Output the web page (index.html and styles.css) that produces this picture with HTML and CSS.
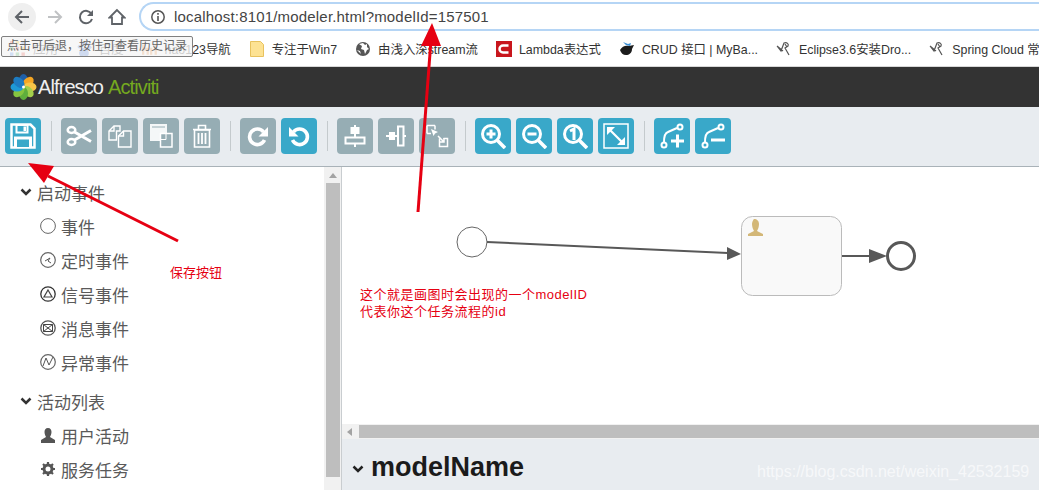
FILE: index.html
```html
<html>
<head>
<meta charset="utf-8">
<link rel="stylesheet" href="styles.css">
</head>
<body>
<div class="chrome">
	<div class="navbar">
		<span class="navBack"><svg width="18" height="18" viewBox="0 0 18 18"><path d="M16 9H3M9 3 3 9l6 6" fill="none" stroke="#5f6368" stroke-width="2"/></svg></span>
		<svg class="navIcon navForward" width="18" height="18" viewBox="0 0 18 18"><path d="M2 9h13M9 3l6 6-6 6" fill="none" stroke="#c0c2c4" stroke-width="2"/></svg>
		<svg class="navIcon" width="18" height="18" viewBox="0 0 18 18"><path d="M14.500 6A6.200 6.200 0 1 0 15 11" fill="none" stroke="#5f6368" stroke-width="2"/><path d="M16 2v6h-6z" fill="#5f6368"/></svg>
		<svg class="navIcon" width="18" height="18" viewBox="0 0 18 18"><path d="M9 2 1.500 9.500H4V16h10V9.500h2.500z" fill="none" stroke="#5f6368" stroke-width="1.800"/></svg>
		<div class="omnibox">
			<svg width="16" height="16" viewBox="0 0 16 16"><circle cx="8" cy="8" r="6.200" fill="none" stroke="#555" stroke-width="1.500"/><path d="M8 7v5M8 4v1.800" stroke="#555" stroke-width="1.600"/></svg>
			<span class="url">localhost:8101/modeler.html?modelId=157501</span>
		</div>
	</div>
	<div class="bookmarks">
		<span class="mark"><svg viewBox="0 0 14 14"><path d="M0 0h3v3H0z" fill="#ea4335"/><path d="M5 0h3v3H5z" fill="#fbbc05"/><path d="M10 0h3v3h-3z" fill="#4285f4"/><path d="M0 5h3v3H0z" fill="#34a853"/><path d="M5 5h3v3H5z" fill="#ea4335"/><path d="M10 5h3v3h-3z" fill="#fbbc05"/><path d="M0 10h3v3H0z" fill="#4285f4"/><path d="M5 10h3v3H5z" fill="#34a853"/><path d="M10 10h3v3h-3z" fill="#ea4335"/></svg>应用</span>
		<span class="mark"><svg viewBox="0 0 14 14"><path d="M7 6c3 0 5 4 4 6s-3 1-4 1-3 1-4-1 1-6 4-6z" fill="#3b6fd8"/><circle cx="3" cy="5" r="1.600" fill="#3b6fd8"/><circle cx="6" cy="2.500" r="1.600" fill="#3b6fd8"/><circle cx="9.500" cy="2.500" r="1.600" fill="#3b6fd8"/><circle cx="12" cy="5.500" r="1.600" fill="#3b6fd8"/></svg>百度</span>
		<span class="mark"><svg viewBox="0 0 14 14"><path d="M1 12V3M1 7h4v5M8 12V6M12 12V3" fill="none" stroke="#ef8b3a" stroke-width="2"/></svg>hao123导航</span>
		<span class="mark"><svg viewBox="0 0 14 16"><path d="M.5.500h10l3 3v12H.5z" fill="#fde293" stroke="#e8c25e"/></svg>专注于Win7</span>
		<span class="mark"><svg viewBox="0 0 16 16"><circle cx="8" cy="8" r="7" fill="#555"/><path d="M4 3l3 2-1 3 3 1 1 4 2-4 2-1-2-2 0-3-2 1-2-2zM2 9l3 1 1 3z" fill="#fff"/></svg>由浅入深stream流</span>
		<span class="mark"><svg viewBox="0 0 16 16"><rect width="16" height="16" fill="#c8161d"/><path d="M12.500 4.500H7a3.500 3.500 0 0 0 0 7h5.500" fill="none" stroke="#fff" stroke-width="2.500"/></svg>Lambda表达式</span>
		<span class="mark"><svg viewBox="0 0 16 16"><path d="M1 9c2-4 6-5 9-4l5-1-2 4c0 4-3 6-6 6S2 12 1 9z" fill="#1c1c1c"/><path d="M4 1l5 2 3-1-1 3-4-1z" fill="#3a8fd6"/></svg>CRUD 接口 | MyBa...</span>
		<span class="mark"><svg viewBox="0 0 16 16"><path d="M1 5l4 5 3-8c3-1 5 1 4 3l-3 2 4 7M9 3l2 3M1 5l6 5" fill="none" stroke="#555" stroke-width="1.200"/></svg>Eclipse3.6安装Dro...</span>
		<span class="mark"><svg viewBox="0 0 16 16"><path d="M1 5l4 5 3-8c3-1 5 1 4 3l-3 2 4 7M9 3l2 3M1 5l6 5" fill="none" stroke="#555" stroke-width="1.200"/></svg>Spring Cloud 常</span>
	</div>
</div>

<div class="header">
	<svg width="27" height="26" viewBox="0 0 26 26">
		<ellipse cx="13" cy="6.500" rx="4.500" ry="6.500" fill="#1f5fa8"/>
		<ellipse cx="13" cy="6.500" rx="4.500" ry="6.500" fill="#f5a623" transform="rotate(45 13 13)"/>
		<ellipse cx="13" cy="6.500" rx="4.500" ry="6.500" fill="#f7c548" transform="rotate(90 13 13)"/>
		<ellipse cx="13" cy="6.500" rx="4.500" ry="6.500" fill="#a3cf4c" transform="rotate(135 13 13)"/>
		<ellipse cx="13" cy="6.500" rx="4.500" ry="6.500" fill="#5fae3c" transform="rotate(180 13 13)"/>
		<ellipse cx="13" cy="6.500" rx="4.500" ry="6.500" fill="#86c440" transform="rotate(225 13 13)"/>
		<ellipse cx="13" cy="6.500" rx="4.500" ry="6.500" fill="#1e9ad6" transform="rotate(270 13 13)"/>
		<ellipse cx="13" cy="6.500" rx="4.500" ry="6.500" fill="#1d7cc2" transform="rotate(315 13 13)"/>
		<circle cx="13" cy="13" r="1.500" fill="#fff"/>
	</svg>
	<span class="brand">Alfresco</span><span class="product">Activiti</span>
</div>

<div class="toolbar">
	<button class="tool live"><svg viewBox="0 0 26 26"><path d="M1.500 1.500h19l4 4v19h-23z" fill="none" stroke="#fff" stroke-width="2.500"/><path d="M6.500 2h11v7.500h-11z" fill="none" stroke="#fff" stroke-width="2"/><path d="M13.500 3.500h2.500v4.500h-2.500z" fill="#fff"/><path d="M4 13.500h18V24H4z" fill="#fff"/><path d="M7 16.500h12V24H7z" fill="#39a8c9"/></svg></button>
	<span class="sep"></span>
	<button class="tool"><svg viewBox="0 0 26 26"><g fill="none" stroke="#fff" stroke-width="2.500"><ellipse cx="5.500" cy="7" rx="3.800" ry="3"/><ellipse cx="5.500" cy="19" rx="3.800" ry="3"/><path d="M8.500 9 25 18.500M8.500 17 25 7.500" stroke-width="3"/></g></svg></button>
	<button class="tool"><svg viewBox="0 0 26 26"><g fill="none" stroke="#fff" stroke-width="1.400"><path d="M7 3h6v5H9.500v9H2V8z"/><path d="M7 3v5H2"/><path d="M16.500 8H24v16H11.500V13z" fill="#96adb4"/><path d="M16.500 8v5h-5"/></g></svg></button>
	<button class="tool"><svg viewBox="0 0 26 26"><path d="M2 1h17v9h-7v8H2z" fill="#f4f7f8"/><path d="M4 4h13" stroke="#96adb4"/><path d="M12.500 10.500H24V24H12.500z" fill="#96adb4" stroke="#fff" stroke-width="1.500"/><path d="M12.500 16.500h5.500v-6" fill="none" stroke="#fff"/></svg></button>
	<button class="tool"><svg viewBox="0 0 26 26"><g fill="none" stroke="#fff"><path d="M4 6.500h18M9.500 6V2.500h7V6" stroke-width="1.600"/><path d="M5.500 7h15v17h-15z" stroke-width="1.600"/><path d="M9.500 10v11M13 10v11M16.500 10v11" stroke-width="1.800"/></g></svg></button>
	<span class="sep"></span>
	<button class="tool"><svg viewBox="0 0 26 26"><path d="M18.500 9a7.800 7.800 0 1 0 1 8" fill="none" stroke="#fff" stroke-width="3.600"/><path d="M23 4v9.500h-9.500z" fill="#fff"/></svg></button>
	<button class="tool live"><svg viewBox="0 0 26 26"><path d="M7.500 9a7.800 7.800 0 1 1-1 8" fill="none" stroke="#fff" stroke-width="3.600"/><path d="M3 4v9.500h9.500z" fill="#fff"/></svg></button>
	<span class="sep"></span>
	<button class="tool"><svg viewBox="0 0 26 26"><path d="M13 2v22" stroke="#fff" stroke-width="2"/><path d="M8.500 4h9v7h-9z" fill="#fff"/><path d="M3.500 14.500h19v6h-19z" fill="#96adb4" stroke="#fff" stroke-width="2"/></svg></button>
	<button class="tool"><svg viewBox="0 0 26 26"><path d="M3 13h20" stroke="#fff" stroke-width="2"/><path d="M6 9h6v8H6z" fill="#fff"/><path d="M15 3.500h5.500v19H15z" fill="#96adb4" stroke="#fff" stroke-width="2"/></svg></button>
	<button class="tool"><svg viewBox="0 0 26 26"><g fill="none" stroke="#fff" stroke-width="1.500"><path d="M3 2.500h8M3 2.500v8M3 10.500h4M11 2.500v4" /><path d="M15.500 15.500v8h8v-8h-4M15.500 15.500h1"/></g><path d="M7 6l7 3-3 1.500L9.500 13z" fill="#fff"/><path d="M14 13l6 6M20 15v4h-4" fill="none" stroke="#fff" stroke-width="1.500"/></svg></button>
	<span class="sep"></span>
	<button class="tool live"><svg viewBox="0 0 26 26"><circle cx="11" cy="11" r="8.500" fill="none" stroke="#fff" stroke-width="3"/><path d="M17.500 17.500 25 25" stroke="#fff" stroke-width="3.600"/><path d="M6.500 11h9M11 6.500v9" stroke="#fff" stroke-width="3"/></svg></button>
	<button class="tool live"><svg viewBox="0 0 26 26"><circle cx="11" cy="11" r="8.500" fill="none" stroke="#fff" stroke-width="3"/><path d="M17.500 17.500 25 25" stroke="#fff" stroke-width="3.600"/><path d="M6.500 11h9" stroke="#fff" stroke-width="3"/></svg></button>
	<button class="tool live"><svg viewBox="0 0 26 26"><circle cx="11" cy="11" r="8.500" fill="none" stroke="#fff" stroke-width="3"/><path d="M17.500 17.500 25 25" stroke="#fff" stroke-width="3.600"/><path d="M8 8l4-2v11" fill="none" stroke="#fff" stroke-width="3"/></svg></button>
	<button class="tool live"><svg viewBox="0 0 26 26"><path d="M1 1h24v24H1z" fill="none" stroke="#fff" stroke-width="1.500"/><path d="M6 6l14 14" stroke="#fff" stroke-width="2.200"/><path d="M4 4h8l-8 8zM22 22h-8l8-8z" fill="#fff"/></svg></button>
	<span class="sep"></span>
	<button class="tool live"><svg viewBox="0 0 26 26"><g fill="none" stroke="#fff" stroke-width="2"><circle cx="5" cy="22" r="2.500"/><circle cx="21" cy="4" r="2.500"/><path d="M5 19c0-5 1-9 4-10l9-4"/></g><path d="M12 18h13M18.500 11.500v13" stroke="#fff" stroke-width="3"/></svg></button>
	<button class="tool live"><svg viewBox="0 0 26 26"><g fill="none" stroke="#fff" stroke-width="2"><circle cx="5" cy="22" r="2.500"/><circle cx="21" cy="4" r="2.500"/><path d="M5 19c0-5 1-9 4-10l9-4"/></g><path d="M11 17h14" stroke="#fff" stroke-width="3"/></svg></button>
</div>

<div class="workspace">
	<div class="palette">
		<div class="paletteList">
			<div class="group"><svg width="12" height="9" viewBox="0 0 12 9"><path d="M1.500 1.500 6 6l4.500-4.500" fill="none" stroke="#333" stroke-width="2.500"/></svg>启动事件</div>
			<div class="item"><svg viewBox="0 0 16 16"><circle cx="8" cy="8" r="7.400" fill="#fff" stroke="#666"/></svg>事件</div>
			<div class="item"><svg viewBox="0 0 16 16"><circle cx="8" cy="8" r="7.300" fill="#fff" stroke="#666" stroke-width="1.200"/><path d="M5 9l5-3-2 3 3 2" fill="none" stroke="#555"/></svg>定时事件</div>
			<div class="item"><svg viewBox="0 0 16 16"><circle cx="8" cy="8" r="7.200" fill="#fff" stroke="#333" stroke-width="1.300"/><path d="M8 4l4 7H4z" fill="none" stroke="#444" stroke-width="1.200"/></svg>信号事件</div>
			<div class="item"><svg viewBox="0 0 16 16"><circle cx="8" cy="8" r="7.200" fill="#fff" stroke="#555" stroke-width="1.300"/><path d="M3.500 4.500h9v7h-9zM3.500 4.500 8 8l4.500-3.500M3.500 11.500 8 8l4.500 3.500" fill="none" stroke="#444"/></svg>消息事件</div>
			<div class="item"><svg viewBox="0 0 16 16"><circle cx="8" cy="8" r="7.300" fill="#fff" stroke="#666" stroke-width="1.200"/><path d="M3 12 6 4l3 7 4-8" fill="none" stroke="#555"/></svg>异常事件</div>
			<div class="group groupNext"><svg width="12" height="9" viewBox="0 0 12 9"><path d="M1.500 1.500 6 6l4.500-4.500" fill="none" stroke="#333" stroke-width="2.500"/></svg>活动列表</div>
			<div class="item"><svg viewBox="0 0 16 16"><path d="M8 1c2.500 0 3.500 2 3.500 4S10.500 9 10 10l5 3v3H1v-3l5-3c-.5-1-1.500-3-1.500-5S5.500 1 8 1z" fill="#555"/></svg>用户活动</div>
			<div class="item"><svg viewBox="0 0 16 16"><circle cx="8" cy="8" r="4" fill="none" stroke="#555" stroke-width="3"/><path d="M8 1v3M8 12v3M1 8h3M12 8h3M3 3l2 2M11 11l2 2M13 3l-2 2M5 11l-2 2" stroke="#555" stroke-width="2.200"/></svg>服务任务</div>
		</div>
		<div class="vscroll"><span class="scrollUp"></span><span class="vthumb"></span></div>
	</div>
	<div class="main">
		<div class="canvas">
			<svg width="697" height="257" viewBox="0 0 697 257">
				<circle cx="130" cy="75" r="15" fill="#fff" stroke="#666"/>
				<path d="M145 75 386 86" stroke="#585858" stroke-width="2"/>
				<path d="M399 87 385 80v13z" fill="#585858"/>
				<rect x="399.500" y="49.500" width="100" height="79" rx="11" fill="#f9f9f9" stroke="#bbb"/>
				<path d="M412 52c3 0 5 2 5 5s-1 5-2 7l6 3v2h-15v-2l6-3c-1-2-2-4-2-7s2-5 2-5z" fill="#d3b777"/>
				<path d="M500 89h30" stroke="#585858" stroke-width="2"/>
				<path d="M545 89 527 82v14z" fill="#585858"/>
				<circle cx="559" cy="89" r="13.500" fill="#fff" stroke="#585858" stroke-width="3"/>
			</svg>
		</div>
		<div class="hscroll"><span class="scrollLeft"></span><span class="hthumb"></span></div>
		<div class="props">
			<svg width="12" height="9" viewBox="0 0 12 9"><path d="M1.500 1.500 6 6l4.500-4.500" fill="none" stroke="#222" stroke-width="2.500"/></svg>
			<span class="modelName">modelName</span>
		</div>
	</div>
</div>

<!-- annotations drawn on top of the screenshot -->
<div class="tooltip">点击可后退，按住可查看历史记录</div>
<svg class="arrows" width="1039" height="490" viewBox="0 0 1039 490">
	<path d="M418 212 431 40" stroke="#e60012" stroke-width="3" fill="none"/>
	<path d="M432 23 421 46 441 46z" fill="#e60012"/>
	<path d="M178 241 48 176" stroke="#e60012" stroke-width="3" fill="none"/>
	<path d="M28 163 54 166 44 183z" fill="#e60012"/>
</svg>
<div class="note noteSave">保存按钮</div>
<div class="note noteModel">这个就是画图时会出现的一个modelID<br>代表你这个任务流程的id</div>
<div class="watermark">https://blog.csdn.net/weixin_42532159</div>
</body>
</html>
```

FILE: styles.css
```css
body {
	margin: 0;
	width: 1039px;
	height: 490px;
	overflow: hidden;
	position: relative;
	font-family: "Liberation Sans", "Noto Sans CJK SC", sans-serif;
	background: #fff;
}

.navbar {
	height: 33px;
	display: flex;
	align-items: center;
	box-sizing: border-box;
	padding-left: 8px;
}

.navBack {
	width: 28px;
	height: 28px;
	border-radius: 14px;
	background: #efefef;
	display: flex;
	align-items: center;
	justify-content: center;
}

.navIcon {
	margin-left: 13px;
}

.navForward {
	margin-left: 10px;
}

.omnibox {
	flex: 1;
	margin-left: 13px;
	height: 29px;
	box-sizing: border-box;
	border: 2px solid #b5d5f5;
	border-right: 0;
	border-radius: 15px 0 0 15px;
	display: flex;
	align-items: center;
	padding-left: 9px;
	gap: 8px;
}

.url {
	font-size: 15px;
	color: #444;
	letter-spacing: 0.18px;
}

.bookmarks {
	height: 33px;
	display: flex;
	align-items: center;
	overflow: hidden;
	white-space: nowrap;
	font-size: 12.4px;
	color: #333;
	gap: 18px;
	padding-left: 10px;
	border-bottom: 1px solid #d8d8d8;
}

.mark {
	display: flex;
	align-items: center;
	gap: 7px;
	height: 29px;
	margin-bottom: 2px;
}

.mark svg {
	width: 16px;
	height: 16px;
}

.header {
	height: 40px;
	background: #333;
	display: flex;
	align-items: center;
	padding-left: 10px;
	font-size: 20px;
	letter-spacing: -0.9px;
}

.brand {
	color: #eee;
	margin-left: 1px;
}

.product {
	color: #75a91f;
	margin-left: 5px;
}

.toolbar {
	height: 60px;
	box-sizing: border-box;
	background: #e8ecf0;
	border-bottom: 1px solid #a9b2b8;
	display: flex;
	align-items: center;
	padding: 0 0 1px 5px;
	gap: 5px;
}

.tool {
	width: 36px;
	height: 36px;
	padding: 5px;
	border: 0;
	border-radius: 4px;
	background: #96adb4;
}

.tool svg {
	display: block;
	width: 26px;
	height: 26px;
}

.live {
	background: #39a8c9;
}

.sep {
	width: 1px;
	height: 30px;
	background: #c4cacd;
	margin: 0 4px 0 5px;
}

.workspace {
	height: 323px;
	display: flex;
}

.palette {
	width: 342px;
	flex: none;
	display: flex;
	border-right: 1px solid #c9cdd0;
	box-sizing: border-box;
}

.paletteList {
	flex: 1;
	padding: 8px 0 0 20px;
	color: #5a5a5a;
}

.group {
	height: 34px;
	font-size: 17px;
	display: flex;
	align-items: center;
	gap: 5px;
}

.groupNext {
	margin-top: 5px;
}

.item {
	height: 34px;
	font-size: 17px;
	display: flex;
	align-items: center;
	gap: 5px;
	padding-left: 20px;
}

.item svg {
	width: 16px;
	height: 16px;
}

.vscroll {
	width: 17px;
	background: #f1f1f1;
	display: flex;
	flex-direction: column;
	align-items: center;
}

.scrollUp {
	margin-top: 6px;
	border: 4px solid transparent;
	border-top: 0;
	border-bottom: 5px solid #a3a3a3;
}

.vthumb {
	width: 14px;
	height: 294px;
	margin-top: 5px;
	background: #bebebe;
}

.main {
	flex: 1;
	min-width: 0;
	display: flex;
	flex-direction: column;
}

.canvas {
	height: 257px;
}

.canvas svg {
	display: block;
}

.hscroll {
	height: 15px;
	background: #f1f1f1;
	display: flex;
	align-items: center;
}

.scrollLeft {
	margin-left: 5px;
	border: 4px solid transparent;
	border-left: 0;
	border-right: 5px solid #a3a3a3;
}

.hthumb {
	flex: 1;
	height: 13px;
	margin-left: 7px;
	background: #bebebe;
}

.props {
	flex: 1;
	background: #e8ecf0;
	display: flex;
	align-items: center;
	gap: 7px;
	padding: 5px 0 0 10px;
}

.props svg {
	margin-top: 5px;
}

.modelName {
	font-size: 27px;
	font-weight: bold;
	color: #1b1b1b;
}

.tooltip {
	position: absolute;
	top: 36px;
	left: 1px;
	width: 192px;
	height: 21px;
	box-sizing: border-box;
	border: 1px solid #808080;
	border-radius: 2px;
	background: rgba(245, 245, 245, 0.8);
	font-size: 12px;
	line-height: 19px;
	padding-left: 5px;
	color: #666;
	white-space: nowrap;
}

.arrows {
	position: absolute;
	top: 0;
	left: 0;
}

.note {
	position: absolute;
	color: #e60012;
	font-size: 13px;
	line-height: 17px;
	white-space: nowrap;
}

.noteSave {
	top: 264px;
	left: 170px;
}

.noteModel {
	top: 286px;
	left: 360px;
	letter-spacing: 0.5px;
}

.watermark {
	position: absolute;
	top: 463px;
	left: 757px;
	font-size: 16px;
	color: rgba(255, 255, 255, 0.65);
	white-space: nowrap;
}
```
